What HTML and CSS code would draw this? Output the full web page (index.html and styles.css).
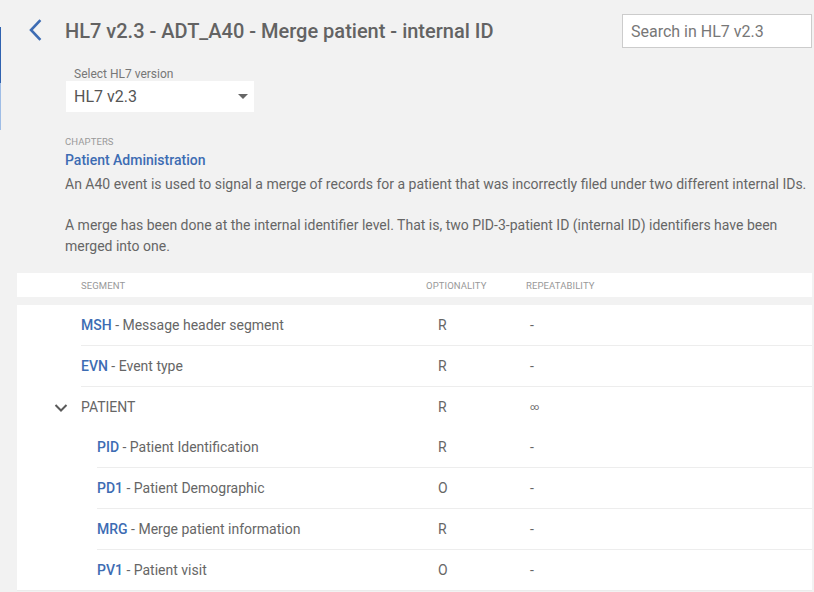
FILE: index.html
```html
<!DOCTYPE html>
<html lang="en">
<head>
<meta charset="utf-8">
<title>HL7 v2.3 - ADT_A40</title>
<link rel="stylesheet" href="styles.css">
</head>
<body>
<div class="edge"><span class="edge-dark"></span><span class="edge-light"></span></div>
<main class="page">
  <header class="topbar">
    <a class="back" href="#" aria-label="Back">
      <svg width="14" height="22" viewBox="0 0 14 22"><path d="M11.5 2 L3 11 L11.5 20" fill="none" stroke="#3d6cb3" stroke-width="2.6" stroke-linecap="square"/></svg>
    </a>
    <h1 class="title">HL7 v2.3 - ADT_A40 - Merge patient - internal ID</h1>
    <input class="search" type="text" placeholder="Search in HL7 v2.3">
  </header>

  <section class="intro">
    <div class="version">
      <label class="version-label">Select HL7 version</label>
      <div class="select">
        <span>HL7 v2.3</span>
        <span class="caret"></span>
      </div>
    </div>

    <div class="chapters">CHAPTERS</div>
    <a class="chapter-link" href="#">Patient Administration</a>
    <p class="desc">An A40 event is used to signal a merge of records for a patient that was incorrectly filed under two different internal IDs.</p>
    <p class="desc gap">A merge has been done at the internal identifier level. That is, two PID-3-patient ID (internal ID) identifiers have been merged into one.</p>
  </section>

  <section class="table">
    <div class="thead">
      <div class="lead"></div>
      <div class="cols">
        <span>SEGMENT</span>
        <span>OPTIONALITY</span>
        <span>REPEATABILITY</span>
      </div>
    </div>
    <div class="tbody">
      <div class="row">
        <div class="lead"></div>
        <div class="cols line-none">
          <span><b class="code">MSH</b> - Message header segment</span>
          <span class="opt">R</span>
          <span class="rep">-</span>
        </div>
      </div>
      <div class="row">
        <div class="lead"></div>
        <div class="cols">
          <span><b class="code">EVN</b> - Event type</span>
          <span class="opt">R</span>
          <span class="rep">-</span>
        </div>
      </div>
      <div class="row">
        <div class="lead">
          <svg class="chev" width="14" height="10" viewBox="0 0 14 10"><path d="M1.5 2 L7 7.5 L12.5 2" fill="none" stroke="#5a5a5a" stroke-width="2"/></svg>
        </div>
        <div class="cols">
          <span class="group">PATIENT</span>
          <span class="opt">R</span>
          <span class="rep inf">∞</span>
        </div>
      </div>
      <div class="row nested">
        <div class="lead"></div>
        <div class="cols line-none">
          <span><b class="code">PID</b> - Patient Identification</span>
          <span class="opt">R</span>
          <span class="rep">-</span>
        </div>
      </div>
      <div class="row nested">
        <div class="lead"></div>
        <div class="cols">
          <span><b class="code">PD1</b> - Patient Demographic</span>
          <span class="opt">O</span>
          <span class="rep">-</span>
        </div>
      </div>
      <div class="row nested">
        <div class="lead"></div>
        <div class="cols">
          <span><b class="code">MRG</b> - Merge patient information</span>
          <span class="opt">R</span>
          <span class="rep">-</span>
        </div>
      </div>
      <div class="row nested">
        <div class="lead"></div>
        <div class="cols">
          <span><b class="code">PV1</b> - Patient visit</span>
          <span class="opt">O</span>
          <span class="rep">-</span>
        </div>
      </div>
    </div>
  </section>
</main>
</body>
</html>
```

FILE: styles.css
```css
* { box-sizing: border-box; }

html, body {
  margin: 0;
  padding: 0;
  background: #f2f2f2;
  font-family: Roboto, "Noto Sans", "Liberation Sans", sans-serif;
  color: #666;
  overflow: hidden;
}

.edge {
  position: absolute;
  left: 0;
  top: 27px;
  width: 1px;
  display: flex;
  flex-direction: column;
}
.edge-dark { display: block; height: 56px; background: #2f62b0; }
.edge-light { display: block; height: 47px; background: #9fbde6; }

.page {
  padding: 14px 2px 0 17px;
}

.topbar {
  display: flex;
  align-items: center;
  height: 34px;
}

.back {
  display: flex;
  width: 14px;
  margin-left: 11px;
  margin-right: 23px;
  margin-top: -2px;
}

.title {
  flex: 1;
  margin: 0;
  font-size: 20px;
  font-weight: 500;
  color: #636363;
  line-height: 33px;
  margin-top: 1px;
}

.search {
  width: 190px;
  height: 34px;
  border: 1px solid #ccc;
  background: #fff;
  padding: 0 8px;
  font-family: inherit;
  font-size: 16px;
  color: #555;
  outline: none;
}
.search::placeholder { color: #777; }

.intro {
  padding-left: 48px;
  padding-right: 4px;
}

.version {
  margin-top: 19px;
  margin-left: 1px;
  width: 188px;
}
.version-label {
  display: block;
  padding-left: 8px;
  font-size: 12px;
  line-height: 14px;
  color: #777;
}
.select {
  display: flex;
  align-items: center;
  justify-content: space-between;
  height: 31px;
  background: #fff;
  padding: 0 6px 0 8px;
  font-size: 16px;
  color: #555;
}
.caret {
  width: 0;
  height: 0;
  border-left: 5px solid transparent;
  border-right: 5px solid transparent;
  border-top: 5px solid #666;
}

.chapters {
  margin-top: 22px;
  font-size: 9.5px;
  line-height: 15px;
  color: #999;
  letter-spacing: 0.1px;
}
.chapter-link {
  display: block;
  font-size: 14px;
  font-weight: 500;
  line-height: 22px;
  color: #3d6cb3;
  text-decoration: none;
}
.desc {
  margin: 3px 0 0;
  font-size: 14px;
  line-height: 21px;
  color: #666;
}
.desc.gap { margin-top: 20px; }

.table {
  margin-top: 16px;
}

.thead, .row {
  display: flex;
  background: #fff;
}
.thead {
  height: 24px;
  font-size: 9.5px;
  color: #999;
  letter-spacing: 0.1px;
}
.lead {
  width: 64px;
  flex: none;
  display: flex;
  align-items: center;
  padding-left: 37px;
}
.nested .lead { width: 80px; }

.cols {
  flex: 1;
  display: grid;
  grid-template-columns: 1fr 100px 286px;
  align-items: center;
}

.tbody {
  margin-top: 8px;
  background: #fff;
  border-bottom: 1px solid #ececec;
}
.row .cols {
  height: 41px;
  border-top: 1px solid #ededed;
  font-size: 14px;
  color: #666;
}
.row .cols.line-none {
  border-top: 0;
  height: 40px;
}

.code {
  font-weight: 500;
  color: #3d6cb3;
}
.opt { padding-left: 12px; }
.rep { padding-left: 4px; }
.inf { font-size: 9px; }
.chev { display: block; margin-top: 2px; }
```
